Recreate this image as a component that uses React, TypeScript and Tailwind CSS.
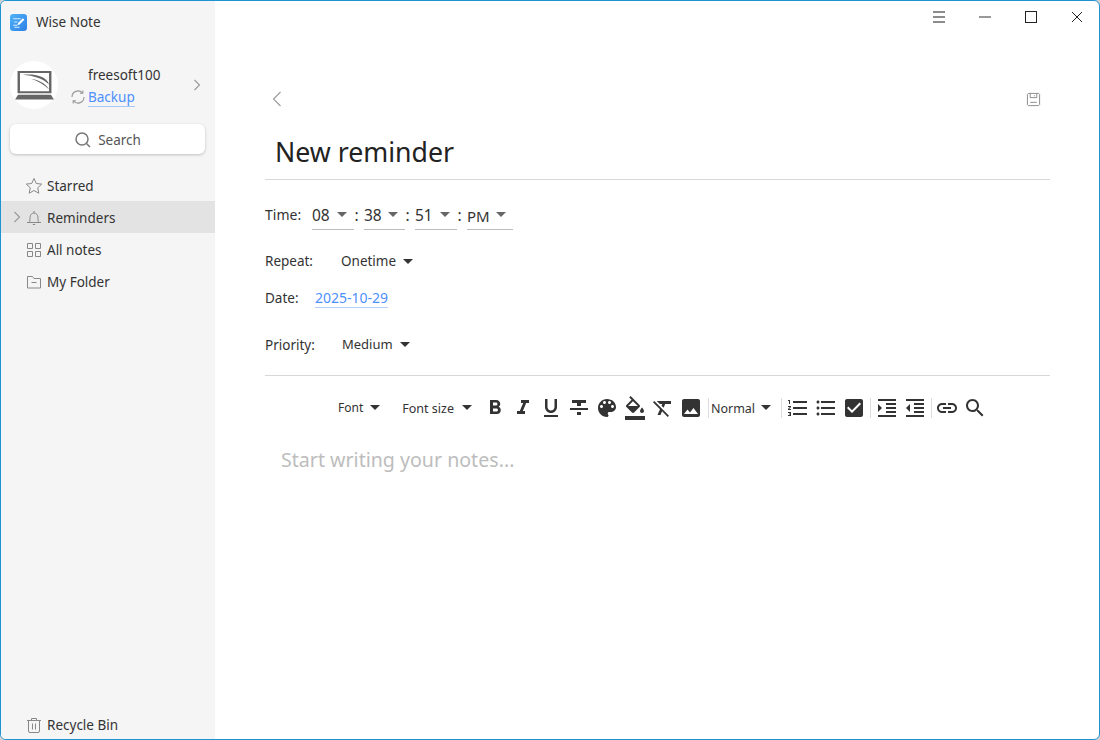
import { ReactNode } from "react";

const font = "font-['Noto_Sans','Open_Sans',sans-serif]";

const Mat = ({ d }: { d: string }) => (
  <svg viewBox="0 0 24 24" className="w-[24px] h-[24px] fill-[#333333] shrink-0">
    <path d={d} />
  </svg>
);

const Caret = ({ color = "border-t-[#333333]" }: { color?: string }) => (
  <span className={`inline-block w-0 h-0 border-x-[5px] border-x-transparent border-t-[5px] ${color}`} />
);

const Sep = ({ className = "" }: { className?: string }) => (
  <span className={`w-px h-[20px] bg-[#dddddd] shrink-0 ${className}`} />
);

const NavRow = ({
  icon,
  label,
  active,
}: {
  icon: ReactNode;
  label: string;
  active?: boolean;
}) => (
  <div className={`relative flex items-center h-[32px] pl-[24px] pt-[2px] gap-[4px] ${active ? "bg-[#e3e3e3]" : ""}`}>
    {active && (
      <svg viewBox="0 0 8 12" className="absolute left-[12px] top-[10px] w-[8px] h-[12px] fill-none stroke-[#999999] stroke-[1.1]">
        <path d="M1.5 1l5 5-5 5" />
      </svg>
    )}
    <span className="w-[18px] h-[18px] flex items-center justify-center">{icon}</span>
    <span className="text-[13.5px] text-[#333333]">{label}</span>
  </div>
);

const navIcon = "w-[18px] h-[18px] fill-none stroke-[#888888] stroke-[1]";

const TimeSelect = ({ value, width, text = "text-[15.5px]" }: { value: string; width: string; text?: string }) => (
  <div className={`flex items-center justify-between h-[31px] pt-[4px] border-b border-[#bbbbbb] ${width}`}>
    <span className={`${text} text-[#333333] leading-none`}>{value}</span>
    <span className="mr-[7px] mb-[3px] flex">
      <Caret color="border-t-[#666666]" />
    </span>
  </div>
);

const Colon = () => <span className="w-[10px] pr-[5px] pt-[2px] text-center text-[15.5px] text-[#333333]">:</span>;

const toolIcons = {
  bold: "M15.6 10.79c.97-.67 1.65-1.77 1.65-2.79 0-2.26-1.75-4-4-4H7v14h7.04c2.09 0 3.71-1.7 3.71-3.79 0-1.52-.86-2.82-2.15-3.42zM10 6.5h3c.83 0 1.5.67 1.5 1.5s-.67 1.5-1.5 1.5h-3v-3zm3.5 9H10v-3h3.5c.83 0 1.5.67 1.5 1.5s-.67 1.5-1.5 1.5z",
  italic: "M10 4v3h2.21l-3.42 8H6v3h8v-3h-2.21l3.42-8H18V4z",
  underline: "M12 17c3.31 0 6-2.69 6-6V3h-2.5v8c0 1.93-1.57 3.5-3.5 3.5S8.5 12.93 8.5 11V3H6v8c0 3.31 2.69 6 6 6zm-7 2v2h14v-2H5z",
  strike: "M10 19h4v-3h-4v3zM5 4v3h5v3h4V7h5V4H5zM3 14h18v-2H3v2z",
  palette: "M12 3c-4.97 0-9 4.03-9 9s4.03 9 9 9c.83 0 1.5-.67 1.5-1.5 0-.39-.15-.74-.39-1.01-.23-.26-.38-.61-.38-.99 0-.83.67-1.5 1.5-1.5H16c2.76 0 5-2.24 5-5 0-4.42-4.03-8-9-8zm-5.5 9c-.83 0-1.5-.67-1.5-1.5S5.67 9 6.5 9 8 9.67 8 10.5 7.33 12 6.5 12zm3-4C8.67 8 8 7.33 8 6.5S8.67 5 9.5 5s1.5.67 1.5 1.5S10.33 8 9.5 8zm5 0c-.83 0-1.5-.67-1.5-1.5S13.67 5 14.5 5s1.5.67 1.5 1.5S15.33 8 14.5 8zm3 4c-.83 0-1.5-.67-1.5-1.5S16.67 9 17.5 9s1.5.67 1.5 1.5-.67 1.5-1.5 1.5z",
  fill: "M16.56 8.94L7.62 0 6.21 1.41l2.38 2.38-5.15 5.15c-.59.59-.59 1.54 0 2.12l5.5 5.5c.29.29.68.44 1.06.44s.77-.15 1.06-.44l5.5-5.5c.59-.58.59-1.53 0-2.12zM5.21 10L10 5.21 14.79 10H5.21zM19 11.5s-2 2.17-2 3.5c0 1.1.9 2 2 2s2-.9 2-2c0-1.33-2-3.5-2-3.5zM2 20h20v4H2z",
  clear: "M3.27 5L2 6.27l6.97 6.97L6.5 19h3l1.57-3.66L16.73 21 18 19.73 3.55 5.27 3.27 5zM6 5v.18L8.82 8h2.4l-.72 1.68 2.1 2.1L14.21 8H20V5H6z",
  image: "M21 19V5c0-1.1-.9-2-2-2H5c-1.1 0-2 .9-2 2v14c0 1.1.9 2 2 2h14c1.1 0 2-.9 2-2zM8.5 13.5l2.5 3.01L14.5 12l4.5 6H5l3.5-4.5z",
  numbered: "M2 17h2v.5H3v1h1v.5H2v1h3v-4H2v1zm1-9h1V4H2v1h1v3zm-1 3h1.8L2 13.1v.9h3v-1H3.2L5 10.9V10H2v1zm5-6v2h14V5H7zm0 14h14v-2H7v2zm0-6h14v-2H7v2z",
  bullet: "M4 10.5c-.83 0-1.5.67-1.5 1.5s.67 1.5 1.5 1.5 1.5-.67 1.5-1.5-.67-1.5-1.5-1.5zm0-6c-.83 0-1.5.67-1.5 1.5S3.17 7.5 4 7.5 5.5 6.83 5.5 6 4.83 4.5 4 4.5zm0 12c-.83 0-1.5.68-1.5 1.5s.68 1.5 1.5 1.5 1.5-.68 1.5-1.5-.67-1.5-1.5-1.5zM7 19h14v-2H7v2zm0-6h14v-2H7v2zm0-8v2h14V5H7z",
  check: "M19 3H5c-1.11 0-2 .9-2 2v14c0 1.1.89 2 2 2h14c1.11 0 2-.9 2-2V5c0-1.1-.89-2-2-2zm-9 14l-5-5 1.41-1.41L10 14.17l7.59-7.59L19 8l-9 9z",
  indent: "M3 21h18v-2H3v2zM3 8v8l4-4-4-4zm8 9h10v-2H11v2zM3 3v2h18V3H3zm8 6h10V7H11v2zm0 4h10v-2H11v2z",
  outdent: "M11 17h10v-2H11v2zm-8-5l4 4V8l-4 4zm0 9h18v-2H3v2zM3 3v2h18V3H3zm8 6h10V7H11v2zm0 4h10v-2H11v2z",
  link: "M3.9 12c0-1.71 1.39-3.1 3.1-3.1h4V7H7c-2.76 0-5 2.24-5 5s2.24 5 5 5h4v-1.9H7c-1.71 0-3.1-1.39-3.1-3.1zM8 13h8v-2H8v2zm9-6h-4v1.9h4c1.71 0 3.1 1.39 3.1 3.1s-1.39 3.1-3.1 3.1h-4V17h4c2.76 0 5-2.24 5-5s-2.24-5-5-5z",
  search: "M15.5 14h-.79l-.28-.27C15.41 12.59 16 11.11 16 9.5 16 5.91 13.09 3 9.5 3S3 5.91 3 9.5 5.91 16 9.5 16c1.61 0 3.09-.59 4.23-1.57l.27.28v.79l5 4.99L20.49 19l-4.99-5zm-6 0C7.01 14 5 11.99 5 9.5S7.01 5 9.5 5 14 7.01 14 9.5 11.99 14 9.5 14z",
};

const Sidebar = () => (
  <aside className="w-[214px] shrink-0 bg-[#f5f5f5] flex flex-col">
    <div className="flex items-center h-[42px] pl-[9px] gap-[9px]">
      <svg viewBox="0 0 16 16" className="w-[17px] h-[17px]">
        <defs>
          <linearGradient id="logo" x1="0" y1="0" x2="1" y2="1">
            <stop offset="0" stopColor="#4fb4f5" />
            <stop offset="1" stopColor="#2f7fe8" />
          </linearGradient>
        </defs>
        <rect width="16" height="16" rx="3" fill="url(#logo)" />
        <path d="M3 4.5h7M4 7.5h3M3 10.5h4M4 12.5h5" stroke="#d5ecff" strokeWidth="1" fill="none" />
        <path d="M7 10.5l.6-2 4.5-4.5 1.4 1.4L9 9.9z" fill="#fff" />
      </svg>
      <span className="text-[13.5px] text-[#333333]">Wise Note</span>
    </div>

    <div className="flex items-center pl-[9px] pt-[12px] h-[72px]">
      <div className="w-[48px] h-[48px] rounded-full bg-white flex items-center justify-center shrink-0">
        <svg viewBox="0 0 40 32" className="w-[39px] h-[31px]">
          <path d="M2.5 1h35v23h-35z" fill="#666666" />
          <path d="M5 3h30v19H5z" fill="#fff" />
          <path d="M8 5c12-1 24 1 27 10-6-6-16-9-27-10zM16 9c7 1 15 4 19 11-5-5-12-9-19-11z" fill="#666666" />
          <path d="M3 25.5h34l3 5H0z" fill="#666666" />
        </svg>
      </div>
      <div className="ml-[12px] mt-[1px] flex flex-col w-[103px]">
        <span className="ml-[18px] text-[13.5px] leading-[20px] text-[#333333]">freesoft100</span>
        <div className="flex items-center mt-[3px]">
          <svg viewBox="0 0 16 16" className="w-[16px] h-[16px] mr-[2px] fill-none stroke-[#999999] stroke-[1.1]">
            <path d="M2 8a6 6 0 0 1 10.5-4M14 8a6 6 0 0 1-10.5 4M12.8 1.5v2.8H10M3.2 14.5v-2.8H6" />
          </svg>
          <span className="text-[13.5px] leading-[18px] text-[#4d90fe] border-b border-[#a9c8fa]">Backup</span>
        </div>
      </div>
      <svg viewBox="0 0 8 12" className="ml-[20px] w-[8px] h-[12px] fill-none stroke-[#999999] stroke-[1.1]">
        <path d="M1.5 1l5 5-5 5" />
      </svg>
    </div>

    <div className="ml-[9px] mr-[10px] mt-[9px] h-[30px] pt-[2px] bg-white rounded-[6px] shadow-[0_1px_3px_rgba(0,0,0,0.22)] flex items-center justify-center gap-[6px]">
      <svg viewBox="0 0 18 18" className="w-[18px] h-[18px] fill-none stroke-[#777777] stroke-[1.5]">
        <circle cx="8" cy="8" r="6" />
        <path d="M12.5 12.5L16 16" />
      </svg>
      <span className="text-[13.5px] text-[#555555]">Search</span>
    </div>

    <nav className="mt-[15px] flex flex-col">
      <NavRow
        label="Starred"
        icon={
          <svg viewBox="0 0 18 18" className={navIcon}>
            <path d="M9 1.5l2.3 5 5.4.6-4 3.7 1.1 5.4L9 13.5l-4.8 2.7 1.1-5.4-4-3.7 5.4-.6z" />
          </svg>
        }
      />
      <NavRow
        active
        label="Reminders"
        icon={
          <svg viewBox="0 0 18 18" className={navIcon}>
            <path d="M2 13.5h14M4 13.5c1.2-1.5 1-3 1-5 0-2.5 1.8-4.5 4-4.5s4 2 4 4.5c0 2-.2 3.5 1 5M9 2v2M7.8 15.5h2.4" />
          </svg>
        }
      />
      <NavRow
        label="All notes"
        icon={
          <svg viewBox="0 0 18 18" className={navIcon}>
            <path d="M2.5 2.5h5v5h-5zM10.5 2.5h5v5h-5zM2.5 10.5h5v5h-5zM10.5 10.5h5v5h-5z" />
          </svg>
        }
      />
      <NavRow
        label="My Folder"
        icon={
          <svg viewBox="0 0 18 18" className={navIcon}>
            <path d="M2.5 3.5h5l1.5 2h6.5v9.5h-13zM6.5 9.5h5" />
          </svg>
        }
      />
    </nav>

    <div className="mt-auto mb-[-1px]">
      <NavRow
        label="Recycle Bin"
        icon={
          <svg viewBox="0 0 18 18" className={navIcon}>
            <path d="M2 4.5h14M6.5 4.5v-2h5v2M3.5 4.5V15A1.5 1.5 0 0 0 5 16.5h8a1.5 1.5 0 0 0 1.5-1.5V4.5M7.5 7.5v6M10.5 7.5v6" />
          </svg>
        }
      />
    </div>
  </aside>
);

const Field = ({ label, labelWidth, children, className }: { label: string; labelWidth: string; children: ReactNode; className: string }) => (
  <div className={`flex items-center text-[13.5px] text-[#333333] ${className}`}>
    <span className={labelWidth}>{label}</span>
    {children}
  </div>
);

const Toolbar = () => (
  <div className="flex items-center mt-[20px] pl-[73px] h-[24px]">
    <span className="text-[12px] text-[#333333] mr-[7px]">Font</span>
    <Caret />
    <span className="text-[12.5px] text-[#333333] pt-[3px] ml-[22px] mr-[8px]">Font size</span>
    <Caret />
    <div className="flex items-center gap-[4px] ml-[11px]">
      <Mat d={toolIcons.bold} />
      <Mat d={toolIcons.italic} />
      <Mat d={toolIcons.underline} />
      <Mat d={toolIcons.strike} />
      <Mat d={toolIcons.palette} />
      <Mat d={toolIcons.fill} />
      <Mat d={toolIcons.clear} />
      <Mat d={toolIcons.image} />
    </div>
    <Sep className="ml-[5px]" />
    <span className="text-[12.5px] text-[#333333] pt-[3px] ml-[2px] mr-[6px]">Normal</span>
    <Caret />
    <Sep className="ml-[10px]" />
    <div className="flex items-center gap-[4px] ml-[4px]">
      <Mat d={toolIcons.numbered} />
      <Mat d={toolIcons.bullet} />
      <Mat d={toolIcons.check} />
    </div>
    <Sep className="ml-[4px]" />
    <div className="flex items-center gap-[4px] ml-[4px]">
      <Mat d={toolIcons.indent} />
      <Mat d={toolIcons.outdent} />
    </div>
    <Sep className="ml-[4px]" />
    <div className="flex items-center gap-[4px] ml-[3px]">
      <Mat d={toolIcons.link} />
      <Mat d={toolIcons.search} />
    </div>
  </div>
);

export default function App() {
  return (
    <div className={`w-[1100px] h-[740px] bg-[#cfcfcf] overflow-hidden ${font}`}>
      <div className="w-full h-full bg-white border border-[#1f93d2] rounded-[6px] overflow-hidden flex">
        <Sidebar />
        <main className="flex-1 flex flex-col min-w-0">
          <div className="flex items-center justify-end h-[32px] shrink-0">
            <svg viewBox="0 0 14 14" className="w-[14px] h-[14px] mr-[33px] fill-[#8c8c8c]">
              <path d="M1 1h12v2H1zM1 6h12v2H1zM1 11h12v2H1z" />
            </svg>
            <span className="w-[12px] h-[2px] bg-[#999999] mr-[34px]" />
            <span className="w-[12px] h-[12px] border border-[#222222] mr-[34px]" />
            <svg viewBox="0 0 12 12" className="w-[12px] h-[12px] mr-[16px] fill-none stroke-[#222222] stroke-[1]">
              <path d="M1 1l10 10M11 1L1 11" />
            </svg>
          </div>

          <div className="pl-[50px] pr-[49px] flex flex-col flex-1">
            <div className="flex items-center justify-between h-[18px] mt-[57px]">
              <svg viewBox="0 0 10 16" className="ml-[7px] w-[10px] h-[16px] fill-none stroke-[#999999] stroke-[1.1]">
                <path d="M8.5 1L1.5 8l7 7" />
              </svg>
              <svg viewBox="0 0 16 16" className="mr-[9px] w-[15px] h-[15px] fill-none stroke-[#888888] stroke-[1]">
                <path d="M2.5 1.5h11l1 1v11l-1 1h-11l-1-1v-11zM4.5 1.5V6h7V1.5M4.5 11h7M9 3.5v1" />
              </svg>
            </div>

            <div className="h-[70px] flex items-center border-b border-[#d8d8d8] pl-[10px] pt-[15px] mt-[2px]">
              <span className="text-[26.7px] text-[#222222] leading-none">New reminder</span>
            </div>

            <div className="flex items-center mt-[19px] text-[#333333]">
              <span className="text-[14px] w-[47px]">Time:</span>
              <TimeSelect value="08" width="w-[42px]" />
              <Colon />
              <TimeSelect value="38" width="w-[41px]" />
              <Colon />
              <TimeSelect value="51" width="w-[42px]" />
              <Colon />
              <TimeSelect value="PM" width="w-[46px]" text="text-[15px]" />
            </div>

            <Field label="Repeat:" labelWidth="w-[76px]" className="mt-[21px]">
              <span className="mr-[7px]">Onetime</span>
              <Caret />
            </Field>

            <Field label="Date:" labelWidth="w-[50px]" className="mt-[17px]">
              <span className="text-[14px] text-[#4d90fe] border-b border-[#b5d0fb] leading-[18px]">2025-10-29</span>
            </Field>

            <Field label="Priority:" labelWidth="w-[77px]" className="mt-[26px]">
              <span className="text-[13px] mr-[7px]">Medium</span>
              <Caret />
            </Field>

            <div className="border-b border-[#d8d8d8] mt-[20px]" />

            <Toolbar />

            <p className="mt-[25px] pl-[16px] text-[19.6px] text-[#bdbdbd]">Start writing your notes...</p>
          </div>
        </main>
      </div>
    </div>
  );
}
